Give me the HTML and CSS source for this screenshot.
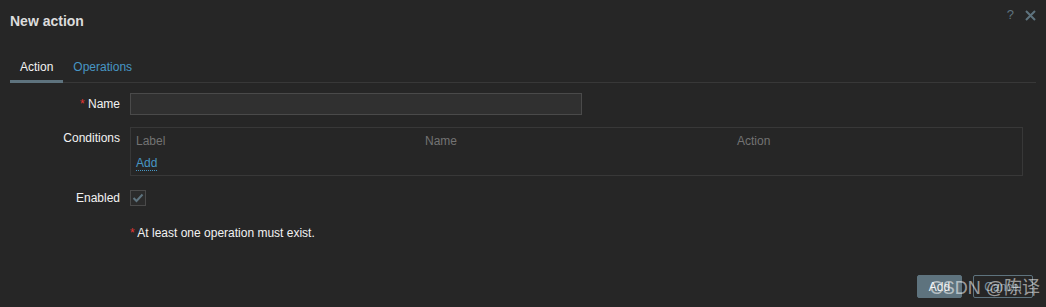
FILE: index.html
```html
<!DOCTYPE html>
<html lang="en">
<head>
  <meta charset="UTF-8">
  <title>New action</title>
  <link rel="stylesheet" href="styles.css">
</head>
<body>

<div class="dialog">
  <div class="dialog-head">
    <h4>New action</h4>
    <div class="head-icons">
      <span class="help">?</span>
      <svg class="close" width="11" height="11" viewBox="0 0 11 11">
        <path d="M1 1 L10 10 M10 1 L1 10" stroke="#5e737e" stroke-width="2"/>
      </svg>
    </div>
  </div>

  <ul class="tabs">
    <li class="tab active">Action</li>
    <li class="tab">Operations</li>
  </ul>

  <div class="form">
    <div class="row">
      <label class="label"><span class="req">*</span> Name</label>
      <input class="field" type="text">
    </div>
    <div class="row">
      <label class="label">Conditions</label>
      <div class="conditions">
        <div class="cond-head">
          <span class="c-label">Label</span>
          <span class="c-name">Name</span>
          <span class="c-action">Action</span>
        </div>
        <a class="link">Add</a>
      </div>
    </div>
    <div class="row row-check">
      <label class="label">Enabled</label>
      <span class="checkbox">
        <svg width="12" height="10" viewBox="0 0 12 10">
          <path d="M1.5 5 L4.5 8 L10.5 1.5" fill="none" stroke="#5e737e" stroke-width="2"/>
        </svg>
      </span>
    </div>
    <div class="row row-note">
      <span class="label"></span>
      <p class="note"><span class="req">*</span> At least one operation must exist.</p>
    </div>
  </div>

  <div class="dialog-foot">
    <button class="btn btn-main">Add</button>
    <button class="btn btn-alt">Cancel</button>
  </div>

  <div class="watermark">CSDN @陈译</div>
</div>

</body>
</html>
```

FILE: styles.css
```css
body {
  margin: 0;
  background-color: #262626;
  font-family: "Liberation Sans", Arial, sans-serif;
  font-size: 12px;
  color: #f2f2f2;
}
.dialog {
  position: relative;
  height: 307px;
  display: flex;
  flex-direction: column;
}
.dialog-head {
  display: flex;
  justify-content: space-between;
  padding: 13px 10px 0 10px;
  height: 40px;
  box-sizing: border-box;
}
.dialog-head h4 {
  margin: 0;
  font-size: 14px;
  line-height: 16px;
  font-weight: bold;
  color: #dcdcdc;
}
.head-icons {
  display: flex;
  gap: 11px;
  margin-top: -6px;
}
.help {
  color: #5e737e;
  font-size: 13px;
  line-height: 16px;
}
.close {
  margin-top: 3px;
}
.tabs {
  list-style: none;
  margin: 13px 10px 0 10px;
  padding: 0;
  display: flex;
  border-bottom: 1px solid #383838;
}
.tab {
  padding: 7px 10px 6px 10px;
  line-height: 14px;
  color: #4796c4;
  border-bottom: 3px solid transparent;
  margin-bottom: -1px;
}
.tab.active {
  color: #f2f2f2;
  border-bottom-color: #5e737e;
}
.form {
  padding-top: 10px;
  display: flex;
  flex-direction: column;
  gap: 12px;
}
.row {
  display: flex;
  gap: 10px;
  align-items: flex-start;
}
.label {
  width: 120px;
  text-align: right;
  line-height: 22px;
  flex-shrink: 0;
}
.req {
  color: #e33734;
}
.field {
  width: 452px;
  height: 22px;
  box-sizing: border-box;
  background-color: #303030;
  border: 1px solid #4a4a4a;
  margin: 0;
  padding: 0 5px;
}
.conditions {
  width: 893px;
  height: 49px;
  box-sizing: border-box;
  border: 1px solid #383838;
  padding: 6px 5px 0 5px;
}
.cond-head {
  display: grid;
  grid-template-columns: 289px 312px 1fr;
  color: #737373;
  line-height: 14px;
}
.link {
  display: inline-block;
  margin-top: 8px;
  color: #4796c4;
  line-height: 14px;
  border-bottom: 1px dotted #4796c4;
}
.row-check {
  margin-top: 2px;
  align-items: center;
}
.row-check .label {
  line-height: 16px;
}
.checkbox {
  width: 16px;
  height: 16px;
  box-sizing: border-box;
  border: 1px solid #4a4a4a;
  background-color: #2b2b2b;
  display: flex;
  align-items: center;
  justify-content: center;
}
.row-note {
  margin-top: 8px;
}
.row-note .label {
  line-height: 14px;
}
.note {
  margin: 0;
  line-height: 14px;
}
.dialog-foot {
  margin-top: auto;
  display: flex;
  justify-content: flex-end;
  gap: 11px;
  padding: 0 13px 9px 0;
}
.btn {
  height: 23px;
  padding: 0 9px;
  font-family: "Liberation Sans", Arial, sans-serif;
  font-size: 12px;
  border: 1px solid #5e737e;
  border-radius: 2px;
}
.btn-main {
  width: 45px;
  background-color: #5e737e;
  color: #f2f2f2;
}
.btn-alt {
  width: 60px;
  background-color: transparent;
  color: #768d99;
}
.watermark {
  position: absolute;
  right: 6px;
  bottom: 8px;
  font-family: "Liberation Sans", "Noto Sans CJK SC", sans-serif;
  font-size: 18px;
  color: rgba(255, 255, 255, 0.55);
  line-height: 22px;
}
```
